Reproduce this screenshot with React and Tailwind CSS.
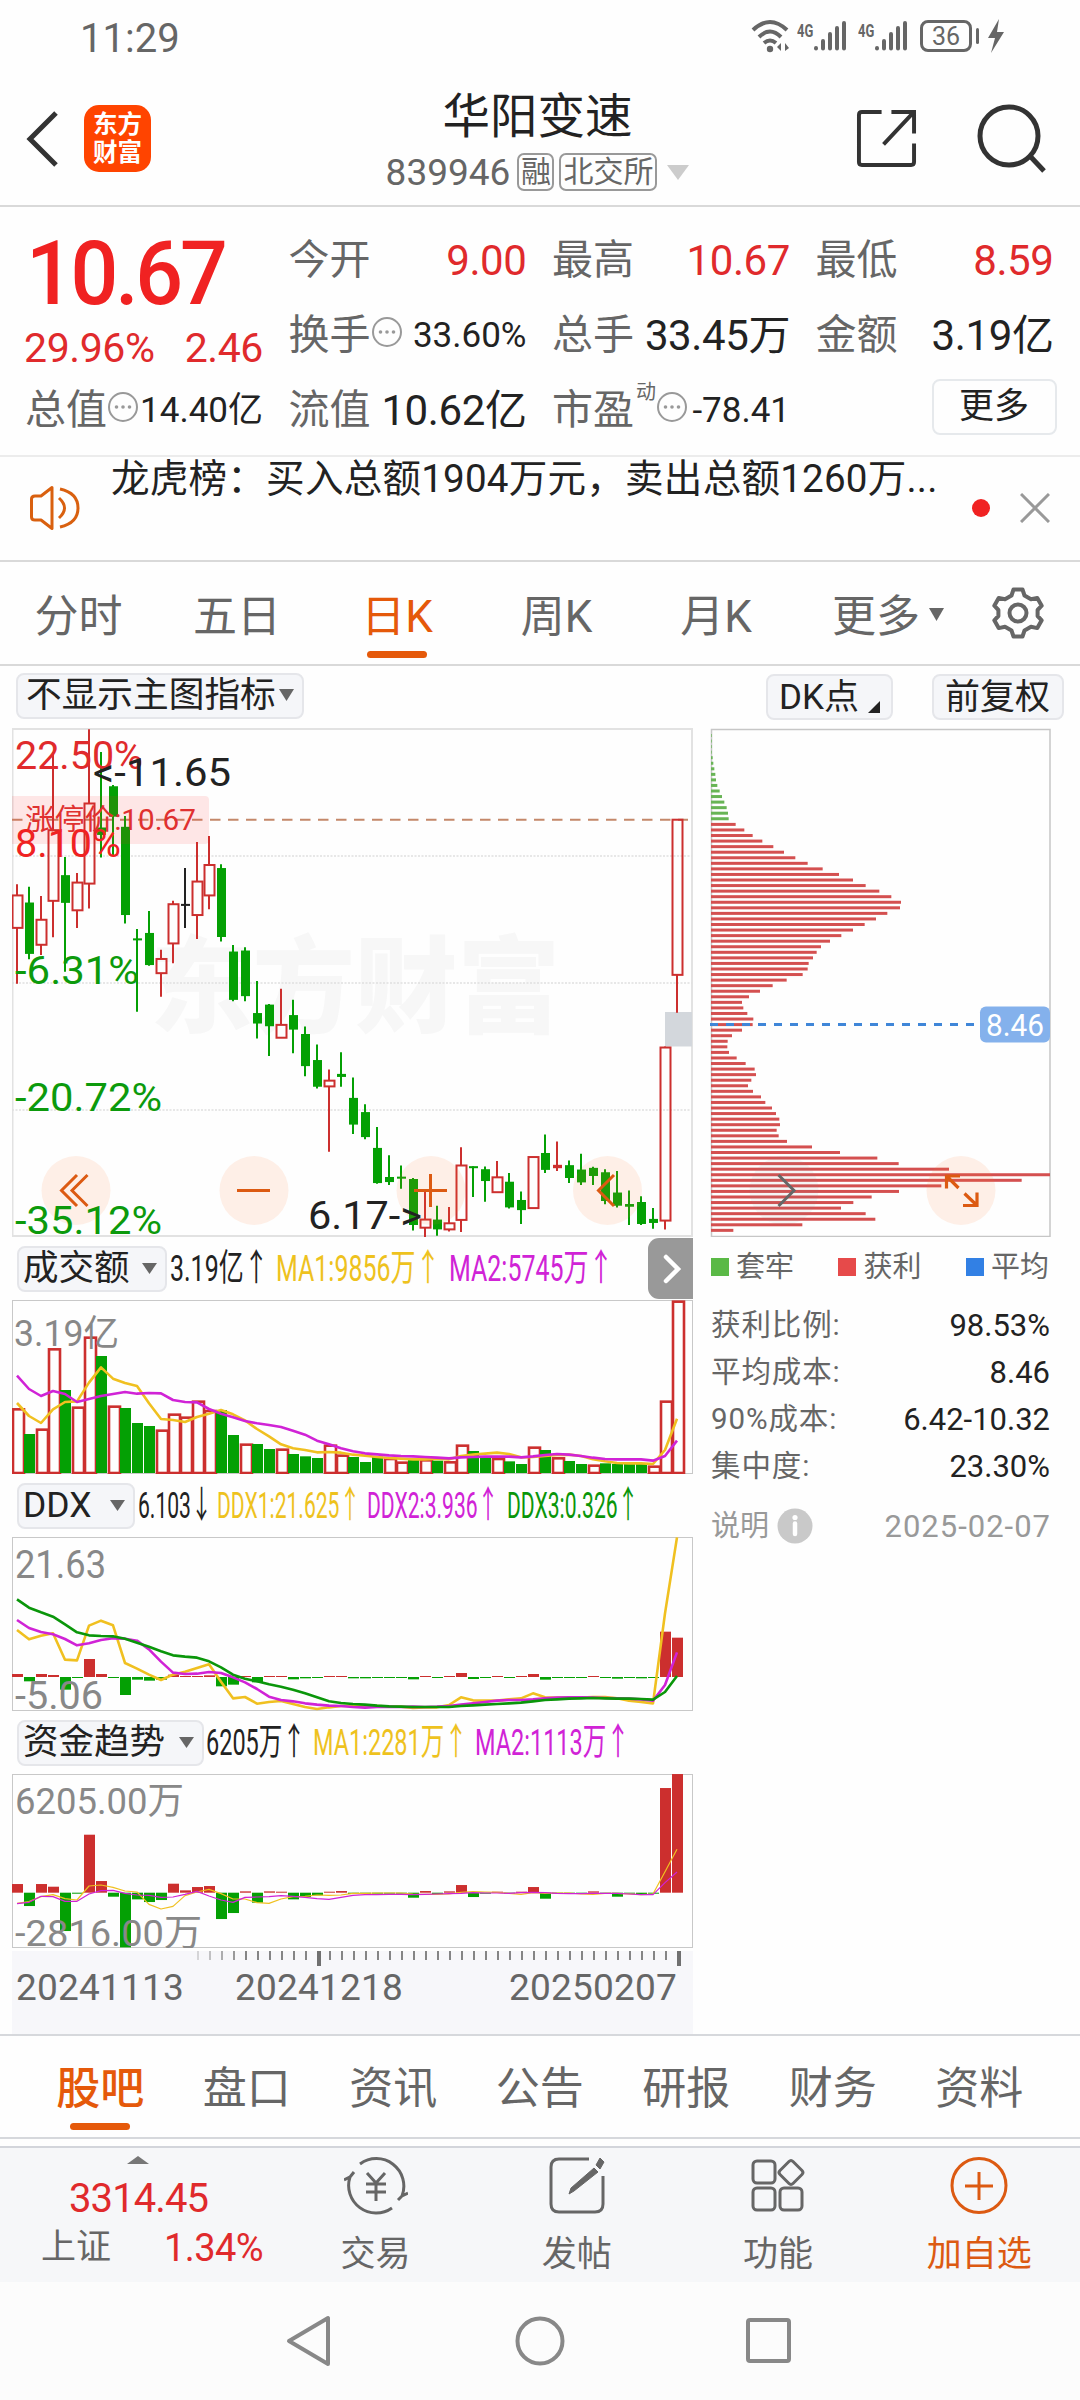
import React from "react";

const PERIODS = [
  { label: "分时", width: "w-[157px]" },
  { label: "五日", width: "w-[160px]" },
  { label: "日K", width: "w-[160px]", active: true },
  { label: "周K", width: "w-[159px]" },
  { label: "月K", width: "w-[160px]" },
];

const BOTTOM_TABS = ["股吧", "盘口", "资讯", "公告", "研报", "财务", "资料"];

const RED = "#cc2f2e";
const GREEN = "#04a004";
const YELLOW = "#f0c020";
const MAGENTA = "#d023d6";

// [kind, high, body top, body bottom, low], see candleY for the scale
const CANDLES = [
  ["r", 486, 519, 615, 780], ["g", 493, 540, 692, 708], ["r", 521, 591, 665, 695], ["r", 95, 326, 535, 643],
  ["g", 405, 459, 541, 745], ["r", 453, 481, 563, 615], ["r", 27, 247, 484, 558], ["g", 95, 318, 340, 407],
  ["g", 192, 196, 286, 400], ["g", 284, 316, 577, 602], ["g", 618, 646, 652, 863], ["g", 565, 630, 725, 727],
  ["r", 680, 707, 749, 819], ["r", 535, 545, 661, 720], ["k", 438, 544, 550, 615], ["r", 361, 478, 577, 648],
  ["r", 343, 429, 519, 560], ["g", 427, 438, 642, 655], ["g", 666, 685, 828, 832], ["g", 672, 682, 817, 832],
  ["g", 772, 867, 898, 942], ["g", 840, 842, 906, 994], ["r", 795, 902, 940, 940], ["g", 828, 873, 916, 986],
  ["g", 907, 929, 1024, 1054], ["g", 960, 1006, 1085, 1090], ["r", 1034, 1067, 1084, 1277], ["g", 983, 1047, 1056, 1085],
  ["g", 1058, 1118, 1197, 1225], ["g", 1137, 1160, 1234, 1240], ["g", 1204, 1266, 1370, 1372], ["g", 1288, 1352, 1367, 1376],
  ["g", 1318, 1351, 1357, 1387], ["g", 1355, 1358, 1494, 1510], ["r", 1396, 1478, 1502, 1530], ["g", 1437, 1478, 1507, 1526],
  ["r", 1441, 1489, 1507, 1513], ["r", 1264, 1318, 1479, 1515], ["g", 1320, 1320, 1326, 1411], ["g", 1321, 1329, 1364, 1425],
  ["r", 1305, 1353, 1397, 1397], ["g", 1340, 1366, 1442, 1445], ["g", 1395, 1420, 1450, 1491], ["r", 1292, 1293, 1444, 1444],
  ["g", 1226, 1281, 1331, 1340], ["R", 1247, 1316, 1326, 1334], ["g", 1303, 1317, 1355, 1370], ["g", 1283, 1330, 1368, 1376],
  ["g", 1322, 1325, 1349, 1376], ["g", 1329, 1338, 1423, 1433], ["g", 1334, 1398, 1437, 1442], ["g", 1392, 1432, 1440, 1494],
  ["g", 1409, 1426, 1491, 1494], ["g", 1444, 1476, 1488, 1505], ["r", 966, 969, 1481, 1507], ["r", 294, 295, 754, 866],
];

const VOLUME = [
  535, -612, 596, 355, -480, 530, 320, -378, 527, -534, -579, -588, 599, 551, 560, 512, 540, -540, -615, 641, -642,
  -657, 656, -672, -679, -684, 644, 674, -681, -696, -680, 684, 695, -690, 688, -692, 694, 644, -663, -684, 684, -694,
  -702, 650, -660, 682, -693, -702, 704, -700, -702, -702, -702, 707, 512, 212,
];
const VOL_MA1 = [
  519, 558, 579, 538, 516, 514, 458, 412, 446, 459, 468, 520, 567, 570, 576, 561, 551, 540, 553, 571, 597, 619, 643,
  655, 660, 667, 666, 668, 674, 677, 681, 684, 686, 688, 688, 686, 688, 678, 674, 671, 668, 672, 682, 681, 678, 675,
  674, 678, 688, 694, 699, 700, 700, 702, 660, 566,
];
const VOL_MA2 = [
  437, 477, 498, 483, 492, 516, 507, 498, 492, 486, 491, 489, 490, 510, 516, 517, 537, 551, 562, 573, 580, 585, 591,
  602, 614, 632, 643, 655, 664, 670, 673, 676, 678, 679, 681, 683, 685, 682, 681, 680, 680, 680, 682, 679, 675, 672,
  674, 678, 683, 687, 688, 688, 688, 692, 678, 632,
];

const DDX = [
  9, -13, 9, 6, -38, -3, 54, 9, -3, -54, -8, -11, -8, 7, 3, 3, 5, -28, -23, 3, -16, 3, 3, -7, -4, -3, 3, 3, -4, -4, -3,
  -3, -3, -7, 3, -3, 3, 12, -6, -3, 3, -3, 3, 9, -8, -3, -3, -3, 3, -3, -5, -3, -4, -3, 136, 118,
];
const DDX1 = [
  1200, 1228, 1217, 1210, 1289, 1291, 1187, 1172, 1186, 1299, 1316, 1334, 1350, 1334, 1325, 1314, 1303, 1355, 1405,
  1401, 1421, 1416, 1413, 1422, 1431, 1437, 1432, 1428, 1427, 1430, 1428, 1430, 1430, 1434, 1432, 1432, 1425, 1402,
  1411, 1412, 1412, 1408, 1405, 1390, 1402, 1403, 1403, 1403, 1401, 1401, 1405, 1412, 1416, 1420, 1150, 922,
];
const DDX2 = [
  1170, 1194, 1206, 1213, 1227, 1246, 1240, 1230, 1225, 1226, 1232, 1258, 1295, 1328, 1332, 1331, 1326, 1329, 1342,
  1357, 1377, 1400, 1410, 1414, 1420, 1424, 1427, 1428, 1431, 1433, 1431, 1430, 1431, 1430, 1431, 1430, 1428, 1424,
  1420, 1416, 1412, 1410, 1410, 1408, 1405, 1403, 1402, 1402, 1403, 1404, 1405, 1406, 1408, 1412, 1365, 1267,
];
const DDX3 = [
  1108, 1133, 1147, 1160, 1183, 1207, 1216, 1218, 1219, 1226, 1238, 1250, 1264, 1276, 1280, 1283, 1294, 1312, 1334,
  1346, 1354, 1363, 1370, 1379, 1390, 1402, 1414, 1419, 1422, 1424, 1427, 1429, 1430, 1431, 1431, 1431, 1431, 1428,
  1426, 1424, 1422, 1420, 1418, 1414, 1410, 1408, 1406, 1405, 1404, 1405, 1406, 1406, 1407, 1409, 1386, 1338,
];

const FLOW = [
  26, -40, 26, 18, -115, -3, 174, 35, -12, -164, -20, -28, -22, 27, 7, 17, 20, -79, -61, 4, -30, 4, 3, -20, -13, -8, 3,
  5, -4, -3, -3, -3, -3, -15, 5, -4, 4, 23, -13, -3, 3, -3, 3, 17, -18, -3, -3, -3, 4, -3, -12, -3, -7, -3, 314, 356,
];
const FLOW1 = [
  610, 605, 590, 584, 596, 600, 558, 555, 562, 573, 576, 613, 627, 619, 587, 576, 568, 581, 597, 597, 608, 610, 597,
  590, 589, 585, 586, 585, 580, 580, 579, 579, 579, 582, 583, 583, 582, 577, 575, 576, 577, 580, 583, 578, 580, 579,
  579, 582, 583, 580, 580, 582, 584, 582, 515, 448,
];
const FLOW2 = [
  611, 607, 589, 590, 604, 604, 582, 572, 571, 580, 585, 586, 592, 591, 583, 574, 588, 600, 607, 592, 591, 590, 587,
  589, 592, 596, 598, 592, 586, 584, 584, 583, 583, 584, 583, 582, 581, 580, 578, 579, 579, 580, 578, 577, 578, 580,
  581, 581, 580, 580, 580, 582, 584, 584, 548, 516,
];

const TRAPPED = [65, 65, 65, 65, 68, 70, 73, 76, 78, 82, 89, 96, 103, 110, 114, 116];
const PROFIT = [
  137, 163, 188, 217, 250, 282, 316, 353, 398, 447, 489, 527, 568, 604, 633, 630, 592, 558, 524, 489, 454, 420, 393,
  380, 369, 356, 353, 338, 290, 248, 210, 177, 156, 160, 172, 190, 188, 156, 126, 113, 112, 117, 140, 167, 194, 198,
  184, 174, 189, 213, 226, 246, 258, 268, 270, 260, 266, 291, 366, 450, 562, 626, 777, 1080, 995, 754, 627, 545, 490,
  453, 527, 556, 337, 130,
];

const CHIP_STATS = [
  ["获利比例:", "98.53%"],
  ["平均成本:", "8.46"],
  ["90%成本:", "6.42-10.32"],
  ["集中度:", "23.30%"],
];

const cx = (i) => 17 + i * 12;
const candleY = (v) => 720 + v / 2.9585;
const toPoints = (values, top) => values.map((v, i) => `${cx(i)},${top + v / 3}`).join(" ");

const Line = ({ values, top, color, width = 2.6 }) => (
  <polyline points={toPoints(values, top)} fill="none" stroke={color} strokeWidth={width} strokeLinejoin="round" />
);

// axis label stretched to a fixed width
const Label = ({ x, y, w, size = 39, fill, children }) => (
  <text x={x} y={y} fontSize={size} fill={fill} textLength={w} lengthAdjust="spacingAndGlyphs">
    {children}
  </text>
);

const Caret = ({ className = "w-[15px] h-[11px] text-[#666]" }) => (
  <svg viewBox="0 0 15 11" preserveAspectRatio="none" className={className}>
    <path d="M0 0H15L7.5 11Z" fill="currentColor" />
  </svg>
);

const Dots = ({ className = "" }) => (
  <svg viewBox="0 0 32 32" className={`w-8 h-8 shrink-0 ${className}`}>
    <circle cx="16" cy="16" r="14" fill="none" stroke="#999" strokeWidth="2" />
    <g fill="#999">
      <circle cx="9.5" cy="16" r="1.8" />
      <circle cx="16" cy="16" r="1.8" />
      <circle cx="22.5" cy="16" r="1.8" />
    </g>
  </svg>
);

const Signal = () => (
  <div className="flex items-start">
    <span className="w-4">
      <span className="inline-block origin-left scale-x-[.72] text-[18px] leading-[16px] font-bold">4G</span>
    </span>
    <svg viewBox="0 0 33 32" className="w-[33px] h-8" stroke="currentColor" strokeWidth="4" strokeLinecap="round">
      <path d="M3 28.5V28M10 28.5V21M17 28.5V14M24 28.5V8M31 28.5V3" />
    </svg>
  </div>
);

const StatusBar = () => (
  <div className="h-[72px] pl-[80px] pr-[76px] flex items-center justify-between text-[#666]">
    <span className="mt-[5px] text-[40px] leading-none">11:29</span>
    <div className="flex items-center">
      <svg viewBox="0 0 40 34" className="w-10 h-[34px] mr-[6px]" fill="none" stroke="currentColor" strokeWidth="4">
        <path d="M2 11Q19 -5 36 11M8 18Q19 7 30 18M13 24Q19 19 25 24" />
        <circle cx="19" cy="30" r="3.2" fill="currentColor" stroke="none" />
        <path d="M30 24V32L26 28ZM34 32V24L38 29Z" fill="currentColor" stroke="none" />
      </svg>
      <Signal />
      <div className="w-[12px]" />
      <Signal />
      <div className="ml-[13px] w-[52px] h-[32px] border-[3px] border-[#666] rounded-[8px] flex items-center justify-center text-[25px] leading-none">
        36
      </div>
      <div className="ml-1 w-[3px] h-4 bg-[#666] rounded" />
      <svg viewBox="0 0 16 34" className="ml-[9px] w-4 h-[34px]">
        <path d="M11 0L0 19H7L3 34L16 13H9Z" fill="currentColor" />
      </svg>
    </div>
  </div>
);

const Header = () => (
  <header className="h-[135px] border-b-2 border-[#d9d9d9] flex items-center justify-between pl-[26px] pr-[33px]">
    <div className="w-[260px] flex items-center">
      <svg viewBox="0 0 32 56" className="w-8 h-14" fill="none" stroke="#333" strokeWidth="5">
        <path d="M30 2L4 28L30 54" />
      </svg>
      <div className="ml-[26px] w-[67px] h-[67px] rounded-[15px] bg-[#ff4400] text-white text-[24.5px] leading-[28px] font-bold flex flex-col items-center justify-center">
        <span>东方</span>
        <span>财富</span>
      </div>
    </div>
    <div className="flex flex-col items-center pt-1 pl-[2px]">
      <h1 className="text-[47.5px] leading-[54px] text-[#222]">华阳变速</h1>
      <div className="mt-[9px] flex items-center text-[#666]">
        <span className="text-[37px] leading-none">839946</span>
        <span className="ml-[7px] w-[37px] h-[38px] border-2 border-[#999] rounded-[7px] flex items-center justify-center text-[30px] leading-none">融</span>
        <span className="ml-[5px] w-[98px] h-[38px] border-2 border-[#999] rounded-[7px] flex items-center justify-center text-[30px] leading-none">北交所</span>
        <Caret className="ml-[10px] w-[22px] h-[15px] text-[#ccc]" />
      </div>
    </div>
    <div className="w-[260px] flex items-center justify-end gap-[60px]">
      <svg viewBox="0 0 62 62" className="w-[61px] h-[61px]" fill="none" stroke="#333" strokeWidth="4">
        <path d="M26 4H6Q3 4 3 7V55Q3 58 6 58H56Q59 58 59 55V36M36 4H59V26M58 5L28 37" />
      </svg>
      <svg viewBox="0 0 70 70" className="w-[70px] h-[70px]" fill="none" stroke="#333" strokeWidth="5">
        <circle cx="32" cy="32" r="29" />
        <path d="M53 52L67 67" />
      </svg>
    </div>
  </header>
);

const Cell = ({ label, value, red, dots, small, sup }) => (
  <div className="flex items-center text-[#666]">
    <span className="-ml-px text-[41px] leading-none">{label}</span>
    {sup && <sup className="ml-[2px] -top-[19px] text-[20px] leading-none">{sup}</sup>}
    {dots && <Dots className="-mt-[7px]" />}
    <span
      className={`ml-auto leading-none whitespace-nowrap ${red ? "text-[#e02a2c]" : "text-[#222]"} ${
        small ? "text-[35px]" : "text-[42px] tracking-[-0.4px]"
      }`}
    >
      {value}
    </span>
  </div>
);

const Quote = () => (
  <section className="h-[250px] pt-[16px] px-[26px] border-b-2 border-[#ececec] grid grid-cols-[237px_237px_237px_237px] gap-x-[26.5px] grid-rows-[75px_75px_75px]">
    <div className="row-span-2 flex flex-col text-[#e02a2c]">
      <span className="origin-left scale-x-[.945] pt-[7px] text-[89px] leading-[88px] font-medium tracking-[-3.4px] text-[#f02222]">10.67</span>
      <div className="-ml-[2px] pt-[9px] flex justify-between text-[41px] leading-[42px] tracking-[-0.4px]">
        <span>29.96%</span>
        <span>2.46</span>
      </div>
    </div>
    <Cell label="今开" value="9.00" red />
    <Cell label="最高" value="10.67" red />
    <Cell label="最低" value="8.59" red />
    <Cell label="换手" value="33.60%" dots small />
    <Cell label="总手" value="33.45万" />
    <Cell label="金额" value="3.19亿" />
    <Cell label="总值" value="14.40亿" dots small />
    <Cell label="流值" value="10.62亿" />
    <Cell label="市盈" value="-78.41" sup="动" dots small />
    <div className="flex items-center justify-end">
      <button className="-mr-[3px] -mt-2 w-[125px] h-[56px] border-2 border-[#e6e9ec] rounded-[8px] text-[35px] leading-none text-[#222]">更多</button>
    </div>
  </section>
);

const News = () => (
  <section className="h-[105px] border-b-2 border-[#d9d9d9] flex">
    <svg viewBox="0 0 52 46" className="ml-[29px] mt-[28px] w-[52px] h-[46px]" fill="none" stroke="#d9600f" strokeWidth="3">
      <path d="M23 2.5L12 11H6Q2.500 11 2.500 14V32Q2.500 35 6 35H12L23 43.500Z" strokeLinejoin="round" />
      <path d="M30 13Q41 23 30 33M31 4Q49 8 49 23Q49 38 31 42" />
    </svg>
    <p className="ml-[30px] mt-[2px] w-[850px] text-[38.6px] leading-[40px] tracking-[0.2px] text-[#222] whitespace-nowrap">
      龙虎榜：买入总额1904万元，卖出总额1260万...
    </p>
    <span className="mt-[42px] ml-[11px] w-[18px] h-[18px] rounded-full bg-[#f02222]" />
    <svg viewBox="0 0 30 30" className="ml-[30px] mt-[36px] w-[30px] h-[30px]" stroke="#999" strokeWidth="3">
      <path d="M1 1L29 29M29 1L1 29" />
    </svg>
  </section>
);

const PeriodTabs = () => (
  <nav className="h-[104px] border-b-2 border-[#d9d9d9] flex text-[44px] leading-none text-[#666]">
    {PERIODS.map(({ label, width, active }) => (
      <button key={label} className={`${width} pt-[33px] flex flex-col items-center ${active ? "text-[#e5590a]" : ""}`}>
        {label}
        {active && <span className="mt-[12px] w-[60px] h-[7px] rounded bg-[#e5590a]" />}
      </button>
    ))}
    <button className="ml-[36px] pt-[33px] flex items-start">
      更多
      <Caret className="mt-[13px] ml-[9px] w-[15px] h-[13px] text-[#666]" />
    </button>
    <svg viewBox="0 0 52 52" className="ml-[48px] mt-[25px] w-[52px] h-[52px]" fill="none" stroke="#666" strokeWidth="4" strokeLinejoin="round">
      <path d="M21.500 2.500H30.500L32.500 8.500L39 12.200L45.300 10.900L49.700 18.700L45.600 23V29L49.700 33.300L45.300 41.100L39 39.800L32.500 43.500L30.500 49.500H21.500L19.500 43.500L13 39.800L6.700 41.100L2.300 33.300L6.400 29V23L2.300 18.700L6.700 10.900L13 12.200L19.500 8.500Z" />
      <circle cx="26" cy="26" r="8.500" />
    </svg>
  </nav>
);

const Chip = ({ children, className = "" }) => (
  <button className={`h-[46px] shrink-0 flex items-center bg-[#f5f6f9] border-2 border-[#e5e6ea] rounded-[8px] text-[#222] leading-none whitespace-nowrap ${className}`}>
    {children}
  </button>
);

const ControlButton = ({ x, gray, children }) => (
  <g fill="none" stroke={gray ? "#666" : "#dc5a12"} strokeWidth="3">
    <circle cx={x} cy="1190.500" r="34.5" stroke="none" fill={gray ? "#888888" : "#ff7830"} fillOpacity={gray ? 0.08 : 0.11} />
    {children}
  </g>
);

const KLine = () => (
  <svg viewBox="12 728 681 509" className="block w-[681px] h-[509px]">
    <text x="150" y="1024" fontSize="105" fontWeight="900" fill="#f7f7f7" textLength="410" lengthAdjust="spacingAndGlyphs">
      东方财富
    </text>
    <rect x="12.500" y="729" width="679.500" height="507" fill="none" stroke="#e2e2e2" strokeWidth="2" />
    <path d="M12 856H692M12 983H692M12 1110H692" stroke="#e0e0e0" strokeWidth="1.500" strokeDasharray="2 1.500" />
    <rect x="665" y="1012" width="27" height="34.500" fill="#d3d7dc" />
    <path d="M12 819.800H688" stroke="#c4886a" strokeWidth="2" strokeDasharray="10.500 7.500" />
    {CANDLES.map(([kind, high, top, bottom, low], i) => {
      const x = cx(i);
      const y = candleY;
      const color = { r: RED, R: RED, g: GREEN, k: "#222" }[kind];
      return (
        <g key={i} stroke={color} strokeWidth="2">
          {kind === "r" ? (
            <>
              <path d={`M${x} ${y(high)}V${y(top)}M${x} ${y(bottom)}V${y(low)}`} />
              <rect x={x - 4.5} y={y(top)} width="10" height={y(bottom) - y(top)} fill="none" />
            </>
          ) : (
            <>
              <path d={`M${x} ${y(high)}V${y(low)}`} />
              <rect x={x - 4} y={y(top)} width="9" height={y(bottom) - y(top)} fill={color} stroke="none" />
            </>
          )}
        </g>
      );
    })}
    <path d="M12 796H205Q209 796 209 800V840Q209 844 205 844H12Z" fill="#ff2020" fillOpacity="0.11" />
    <Label x="25" y="830" w="171" size="29" fill="#e0302f">涨停价:10.67</Label>
    <Label x="15" y="768.500" w="128" fill="#e02a2c">22.50%</Label>
    <Label x="15" y="857" w="106" fill="#f02222">8.10%</Label>
    <Label x="15" y="983.500" w="124" fill="#0c9a0c">-6.31%</Label>
    <Label x="15" y="1111" w="147" fill="#0c9a0c">-20.72%</Label>
    <Label x="93" y="786" w="138" fill="#222">&lt;-11.65</Label>
    <ControlButton x="76">
      <path d="M77 1175L61.500 1190.500L77 1206M87.500 1175L72 1190.500L87.500 1206" />
    </ControlButton>
    <ControlButton x="254">
      <path d="M237 1190.500H270" />
    </ControlButton>
    <ControlButton x="431">
      <path d="M414 1190.500H447M430.500 1174V1207" />
    </ControlButton>
    <ControlButton x="607.500">
      <path d="M614 1175L598.500 1190.500L614 1206" />
    </ControlButton>
    <Label x="15" y="1234" w="147" fill="#0c9a0c">-35.12%</Label>
    <Label x="308" y="1229" w="114" fill="#222">6.17-&gt;</Label>
  </svg>
);

const IndicatorRow = ({ name, chipClass, squeeze = "scale-x-[.64]", items }) => (
  <div className="h-[63px] pl-[5px] flex items-center">
    <Chip className={`justify-between pl-[4px] pr-[8px] text-[35.5px] ${chipClass}`}>
      {name}
      <Caret />
    </Chip>
    {items.map(([text, boxClass]) => (
      <span key={text} className={`shrink-0 h-[40px] ${boxClass}`}>
        <span className={`inline-block origin-left whitespace-nowrap text-[37px] leading-[40px] ${squeeze}`}>{text}</span>
      </span>
    ))}
  </div>
);

const SubChart = ({ top, children }) => (
  <svg viewBox={`12 ${top} 681 174`} className="block w-[681px] h-[174px]">
    <rect x="12.500" y={top + 0.5} width="680" height="173" fill="none" stroke="#c8c8c8" />
    {children}
  </svg>
);

const Histogram = ({ values, zero }) =>
  values.map((v, i) => (
    <rect
      key={i}
      x={12 + i * 12}
      y={v > 0 ? zero - v / 3 : zero}
      width="11"
      height={Math.abs(v) / 3}
      fill={v > 0 ? RED : GREEN}
    />
  ));

const VolumeChart = () => (
  <SubChart top={1300}>
    {VOLUME.map((v, i) => {
      const y = 1230 + Math.abs(v) / 3;
      return v > 0 ? (
        <rect key={i} x={13 + i * 12} y={y + 1} width="11" height={1472 - y} fill="none" stroke={RED} strokeWidth="2.600" />
      ) : (
        <rect key={i} x={12 + i * 12} y={y} width="11" height={1473 - y} fill={GREEN} />
      );
    })}
    <Label x="14" y="1346" w="105" size="36" fill="#888">3.19亿</Label>
    <Line values={VOL_MA1} top={1230} color={YELLOW} />
    <Line values={VOL_MA2} top={1230} color={MAGENTA} />
  </SubChart>
);

const DdxChart = () => (
  <SubChart top={1537}>
    <Histogram values={DDX} zero={1677} />
    <Label x="15" y="1578" w="91" size="38" fill="#888">21.63</Label>
    <Label x="15" y="1709" w="88" size="38" fill="#888">-5.06</Label>
    <Line values={DDX1} top={1230} color={YELLOW} />
    <Line values={DDX2} top={1230} color={MAGENTA} />
    <Line values={DDX3} top={1230} color="#0a960a" />
  </SubChart>
);

const FlowChart = () => (
  <SubChart top={1774}>
    <Histogram values={FLOW} zero={1892.7} />
    <Label x="15" y="1814" w="169" size="37" fill="#888">6205.00万</Label>
    <Label x="15" y="1946" w="187" size="37" fill="#888">-2816.00万</Label>
    <Line values={FLOW1} top={1700} color={YELLOW} width={1.2} />
    <Line values={FLOW2} top={1700} color={MAGENTA} width={1.2} />
  </SubChart>
);

const DateAxis = () => (
  <div className="mt-[3px] h-[83px] w-[681px] bg-[#f7f7fa] text-[#666]">
    <svg viewBox="12 1951 681 15" className="block w-[681px] h-[15px]">
      {Array.from({ length: 41 }, (_, i) => {
        const major = i === 10 || i === 40;
        return (
          <rect
            key={i}
            x={197 + i * 12}
            y="1951"
            width={major ? 4 : 2}
            height={major ? 15 : 9}
            fill="#707070"
            fillOpacity={major ? 1 : Math.min(0.85, 0.25 + i * 0.15)}
          />
        );
      })}
    </svg>
    <div className="pl-[4px] pr-[16px] pt-px flex text-[37px] leading-[42px]">
      <span className="tracking-[0.2px]">20241113</span>
      <span className="ml-[51px] tracking-[0.2px]">20241218</span>
      <span className="ml-auto tracking-[0.2px]">20250207</span>
    </div>
  </div>
);

const CostDistribution = () => (
  <svg viewBox="710 728 342 509" className="block w-[342px] h-[509px]">
    <rect x="711.500" y="729.500" width="338.500" height="507" fill="none" stroke="#c6c6c6" strokeWidth="1.500" />
    {TRAPPED.map((v, i) => (
      <rect key={i} x="711" y={734 + i * 5.55} width={v / 3 - 21} height="3" fill="#68b455" />
    ))}
    {PROFIT.map((v, i) => (
      <rect key={i} x="711" y={822.9 + i * 5.561} width={v / 3 - 21} height="3" fill="#d45050" />
    ))}
    <path d="M710 1024.500H975" stroke="#3f86d8" strokeWidth="3" strokeDasharray="8 8" />
    <rect x="980" y="1006.500" width="70" height="36" rx="6" fill="#84b1ec" />
    <Label x="986" y="1036" w="58" size="31" fill="#fff">8.46</Label>
    <ControlButton x="784" gray>
      <path d="M778.500 1175L794 1190.500L778.500 1206" />
    </ControlButton>
    <ControlButton x="961">
      <path d="M946.500 1188.500V1176H960M947 1176.500L958.500 1188M977 1192.500V1205.500H963M976 1204.500L964.500 1193.500" strokeWidth="3.200" />
    </ControlButton>
  </svg>
);

const Legend = ({ color, children }) => (
  <span className="flex items-center gap-[7px]">
    <i className={`w-[18px] h-[18px] ${color}`} />
    {children}
  </span>
);

const CostPanel = () => (
  <aside className="w-[342px] ml-[17px]">
    <CostDistribution />
    <div className="mt-[10px] h-[40px] flex items-center justify-between text-[29px] leading-none text-[#666] pl-px pr-[3px]">
      <Legend color="bg-[#5ab946]">套牢</Legend>
      <Legend color="bg-[#e64a4a]">获利</Legend>
      <Legend color="bg-[#3280e4]">平均</Legend>
    </div>
    <dl className="mt-[15px] pl-px pr-[2px]">
      {CHIP_STATS.map(([label, value]) => (
        <div key={label} className="h-[47px] flex items-center justify-between leading-none">
          <dt className="text-[29.5px] tracking-[0.9px] text-[#666]">{label}</dt>
          <dd className="text-[31px] text-[#222]">{value}</dd>
        </div>
      ))}
    </dl>
    <div className="mt-[13px] h-[46px] pl-px pr-[2px] flex items-center text-[29px] leading-none text-[#999]">
      说明
      <svg viewBox="0 0 36 36" className="ml-2 w-9 h-9">
        <circle cx="18" cy="18" r="17.500" fill="#c9c9c9" />
        <path d="M18 15.500V26" stroke="#fff" strokeWidth="4.500" strokeLinecap="round" />
        <circle cx="18" cy="9.500" r="2.600" fill="#fff" />
      </svg>
      <span className="ml-auto text-[31px] tracking-[1px] -mr-px">2025-02-07</span>
    </div>
  </aside>
);

const BottomTabs = () => (
  <nav className="h-[105px] pl-[27px] border-y-2 border-[#d6d8dc] flex text-[44px] leading-none text-[#666]">
    {BOTTOM_TABS.map((tab, i) => (
      <button key={tab} className={`w-[146.5px] pt-[31px] flex flex-col items-center ${i === 0 ? "text-[#e5590a] font-medium" : ""}`}>
        {tab}
        {i === 0 && <span className="mt-[12px] w-[60px] h-[7px] rounded bg-[#e5590a]" />}
      </button>
    ))}
  </nav>
);

const ToolItem = ({ label, icon, active }) => (
  <button className={`w-[201.25px] pt-[6px] flex flex-col items-center ${active ? "text-[#dc5a12]" : "text-[#666]"}`}>
    <svg viewBox="0 0 64 64" className="w-16 h-16" fill="none" stroke="currentColor" strokeWidth="3">
      {icon}
    </svg>
    <span className="mt-[19px] text-[35px] leading-none">{label}</span>
  </button>
);

const Toolbar = () => (
  <footer className="mt-[7px] h-[136px] border-t-2 border-[#d3d5db] bg-[#f6f7f9] flex">
    <div className="w-[275px] pt-[8px]">
      <svg viewBox="0 0 22 8" className="block ml-[127px] w-[22px] h-2">
        <path d="M11 0L22 8H0Z" fill="#777" />
      </svg>
      <div className="mt-[14px] pl-[69px] text-[40px] leading-[42px] tracking-[-0.9px] text-[#e02a2c]">3314.45</div>
      <div className="mt-[7px] pl-[41px] pr-[12px] flex items-center justify-between leading-[42px]">
        <span className="text-[35px] text-[#666]">上证</span>
        <span className="text-[38px] tracking-[-0.6px] text-[#e02a2c]">1.34%</span>
      </div>
    </div>
    <ToolItem
      label="交易"
      icon={
        <>
          <path d="M16 10A27.500 27.500 0 0 1 58 42L54 46M58 42L64 39M48 54A27.500 27.500 0 0 1 6 23L0 26M6 23L10 18" />
          <path d="M23 19L32 29L41 19M22 30H42M22 38H42M32 29V47" />
        </>
      }
    />
    <ToolItem
      label="发帖"
      icon={
        <>
          <path d="M44 5H14Q6 5 6 13V50Q6 58 14 58H50Q58 58 58 50V22" />
          <path d="M51 11L55 4L59 8L55 15ZM49 14L53 18L29 37L24 40L26 34Z" fill="currentColor" strokeWidth="1" />
        </>
      }
    />
    <ToolItem
      label="功能"
      icon={
        <>
          <rect x="7" y="7" width="22" height="22" rx="4" />
          <rect x="7" y="34" width="22" height="22" rx="4" />
          <rect x="34" y="34" width="22" height="22" rx="4" />
          <path d="M43 7.500Q45 5.500 47 7.500L56 16.500Q58 18.500 56 20.500L47 29.500Q45 31.500 43 29.500L34 20.500Q32 18.500 34 16.500Z" />
        </>
      }
    />
    <ToolItem
      label="加自选"
      active
      icon={
        <>
          <circle cx="32" cy="31.500" r="27" />
          <path d="M18 32H46M32 18V46" />
        </>
      }
    />
  </footer>
);

const SystemNav = () => (
  <div className="h-[118px] bg-[#fcfcfc] flex items-center justify-center gap-[178px]">
    <svg viewBox="0 0 50 54" className="w-[50px] h-[54px]" fill="none" stroke="#888" strokeWidth="4" strokeLinejoin="round">
      <path d="M43 4V50L4 27Z" />
    </svg>
    <svg viewBox="0 0 54 54" className="w-[54px] h-[54px]" fill="none" stroke="#888" strokeWidth="4">
      <circle cx="27" cy="27" r="22.500" />
    </svg>
    <svg viewBox="0 0 50 54" className="w-[50px] h-[54px]" fill="none" stroke="#888" strokeWidth="4">
      <rect x="3" y="6" width="41" height="41" rx="2" />
    </svg>
  </div>
);

const App = () => (
  <div className="w-[1080px] h-[2400px] overflow-hidden bg-[#fefefe] font-['Roboto','Noto_Sans_CJK_SC',sans-serif]">
    <StatusBar />
    <Header />
    <Quote />
    <News />
    <PeriodTabs />

    {/* Main chart options */}
    <div className="h-[62px] pl-[16px] pr-[16px] pt-[7px] flex items-start">
      <Chip className="w-[288px] pl-[8px] text-[35.700px]">
        不显示主图指标
        <Caret className="ml-[3px] -mt-[2px] w-[15px] h-[12px] text-[#666]" />
      </Chip>
      <Chip className="ml-auto mt-px w-[127px] pl-[11px] text-[35px]">
        DK点
        <svg viewBox="0 0 12 12" className="ml-[9px] mt-[20px] w-3 h-3">
          <path d="M12 0V12H0Z" fill="#222" />
        </svg>
      </Chip>
      <Chip className="ml-[39px] mt-px w-[132px] pl-[11px] text-[35px]">前复权</Chip>
    </div>

    <main className="h-[1306px] pl-[12px] flex items-start">
      <div className="w-[681px]">
        <KLine />
        <div className="flex items-start">
          <IndicatorRow
            name="成交额"
            chipClass="w-[150px]"
            squeeze="scale-x-[.675]"
            items={[
              ["3.19亿↑", "w-[106px] ml-[3px] text-[#222]"],
              ["MA1:9856万↑", "w-[173px] text-[#eec21e]"],
              ["MA2:5745万↑", "w-[199px] text-[#d023d6]"],
            ]}
          />
          <button className="mt-px w-[45px] h-[61px] shrink-0 rounded-l-[11px] bg-[#999] flex items-center justify-center" aria-label="展开">
            <svg viewBox="0 0 20 32" className="ml-[2px] w-5 h-8" fill="none" stroke="#fff" strokeWidth="4.500" strokeLinecap="round">
              <path d="M4 4L16 16L4 28" />
            </svg>
          </button>
        </div>
        <VolumeChart />
        <IndicatorRow
          name="DDX"
          chipClass="w-[118px]"
          squeeze="scale-x-[.57]"
          items={[
            ["6.103↓", "w-[79px] ml-[3px] text-[#222]"],
            ["DDX1:21.625↑", "w-[150px] text-[#eec21e]"],
            ["DDX2:3.936↑", "w-[140px] text-[#d023d6]"],
            ["DDX3:0.326↑", "w-[140px] text-[#0a960a]"],
          ]}
        />
        <DdxChart />
        <IndicatorRow
          name="资金趋势"
          chipClass="w-[187px]"
          squeeze="scale-x-[.635]"
          items={[
            ["6205万↑", "w-[107px] ml-[2px] text-[#222]"],
            ["MA1:2281万↑", "w-[162px] text-[#eec21e]"],
            ["MA2:1113万↑", "w-[162px] text-[#d023d6]"],
          ]}
        />
        <FlowChart />
        <DateAxis />
      </div>
      <CostPanel />
    </main>

    <BottomTabs />
    <Toolbar />
    <SystemNav />
  </div>
);

export default App;
